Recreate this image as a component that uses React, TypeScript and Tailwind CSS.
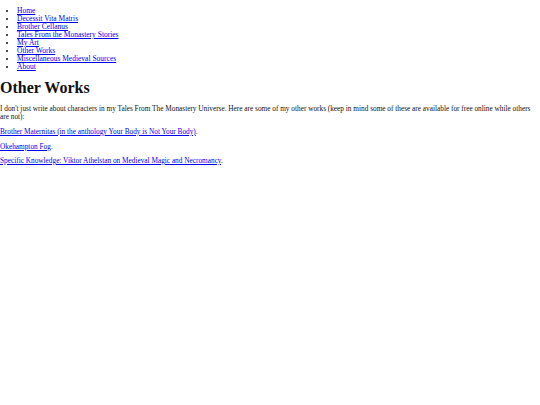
export default function App() {
  const items = [
    "Home",
    "Decessit Vita Matris",
    "Brother Cellanus",
    "Tales From the Monastery Stories",
    "My Art",
    "Other Works",
    "Miscellaneous Medieval Sources",
    "About",
  ];
  const font = { fontFamily: '"Liberation Serif", Georgia, serif' };
  const link = "text-[#0000ee] underline";
  return (
    <div className="bg-white text-[#111] min-h-[405px]" style={font}>
      <ul className="list-disc pl-[17px] pt-[7px] text-[7.5px] leading-[8px] m-0">
        {items.map((t) => (
          <li key={t}>
            <a href="#" className={link}>{t}</a>
          </li>
        ))}
      </ul>
      <h1 className="text-[16px] font-bold leading-[20px] mt-[7px] mb-[7px]">Other Works</h1>
      <p className="text-[7.3px] leading-[8px] mb-[7px]">
        I don't just write about characters in my Tales From The Monastery Universe. Here are some of my other works (keep in mind some of these are available for free online while others are not):
      </p>
      <p className="text-[7.3px] leading-[8px] mb-[7px]">
        <a href="#" className={link}>Brother Maternitas (in the anthology Your Body is Not Your Body)</a>.
      </p>
      <p className="text-[7.3px] leading-[8px] mb-[6px]">
        <a href="#" className={link}>Okehampton Fog</a>.
      </p>
      <p className="text-[7.3px] leading-[8px]">
        <a href="#" className={link}>Specific Knowledge: Viktor Athelstan on Medieval Magic and Necromancy</a>.
      </p>
    </div>
  );
}
